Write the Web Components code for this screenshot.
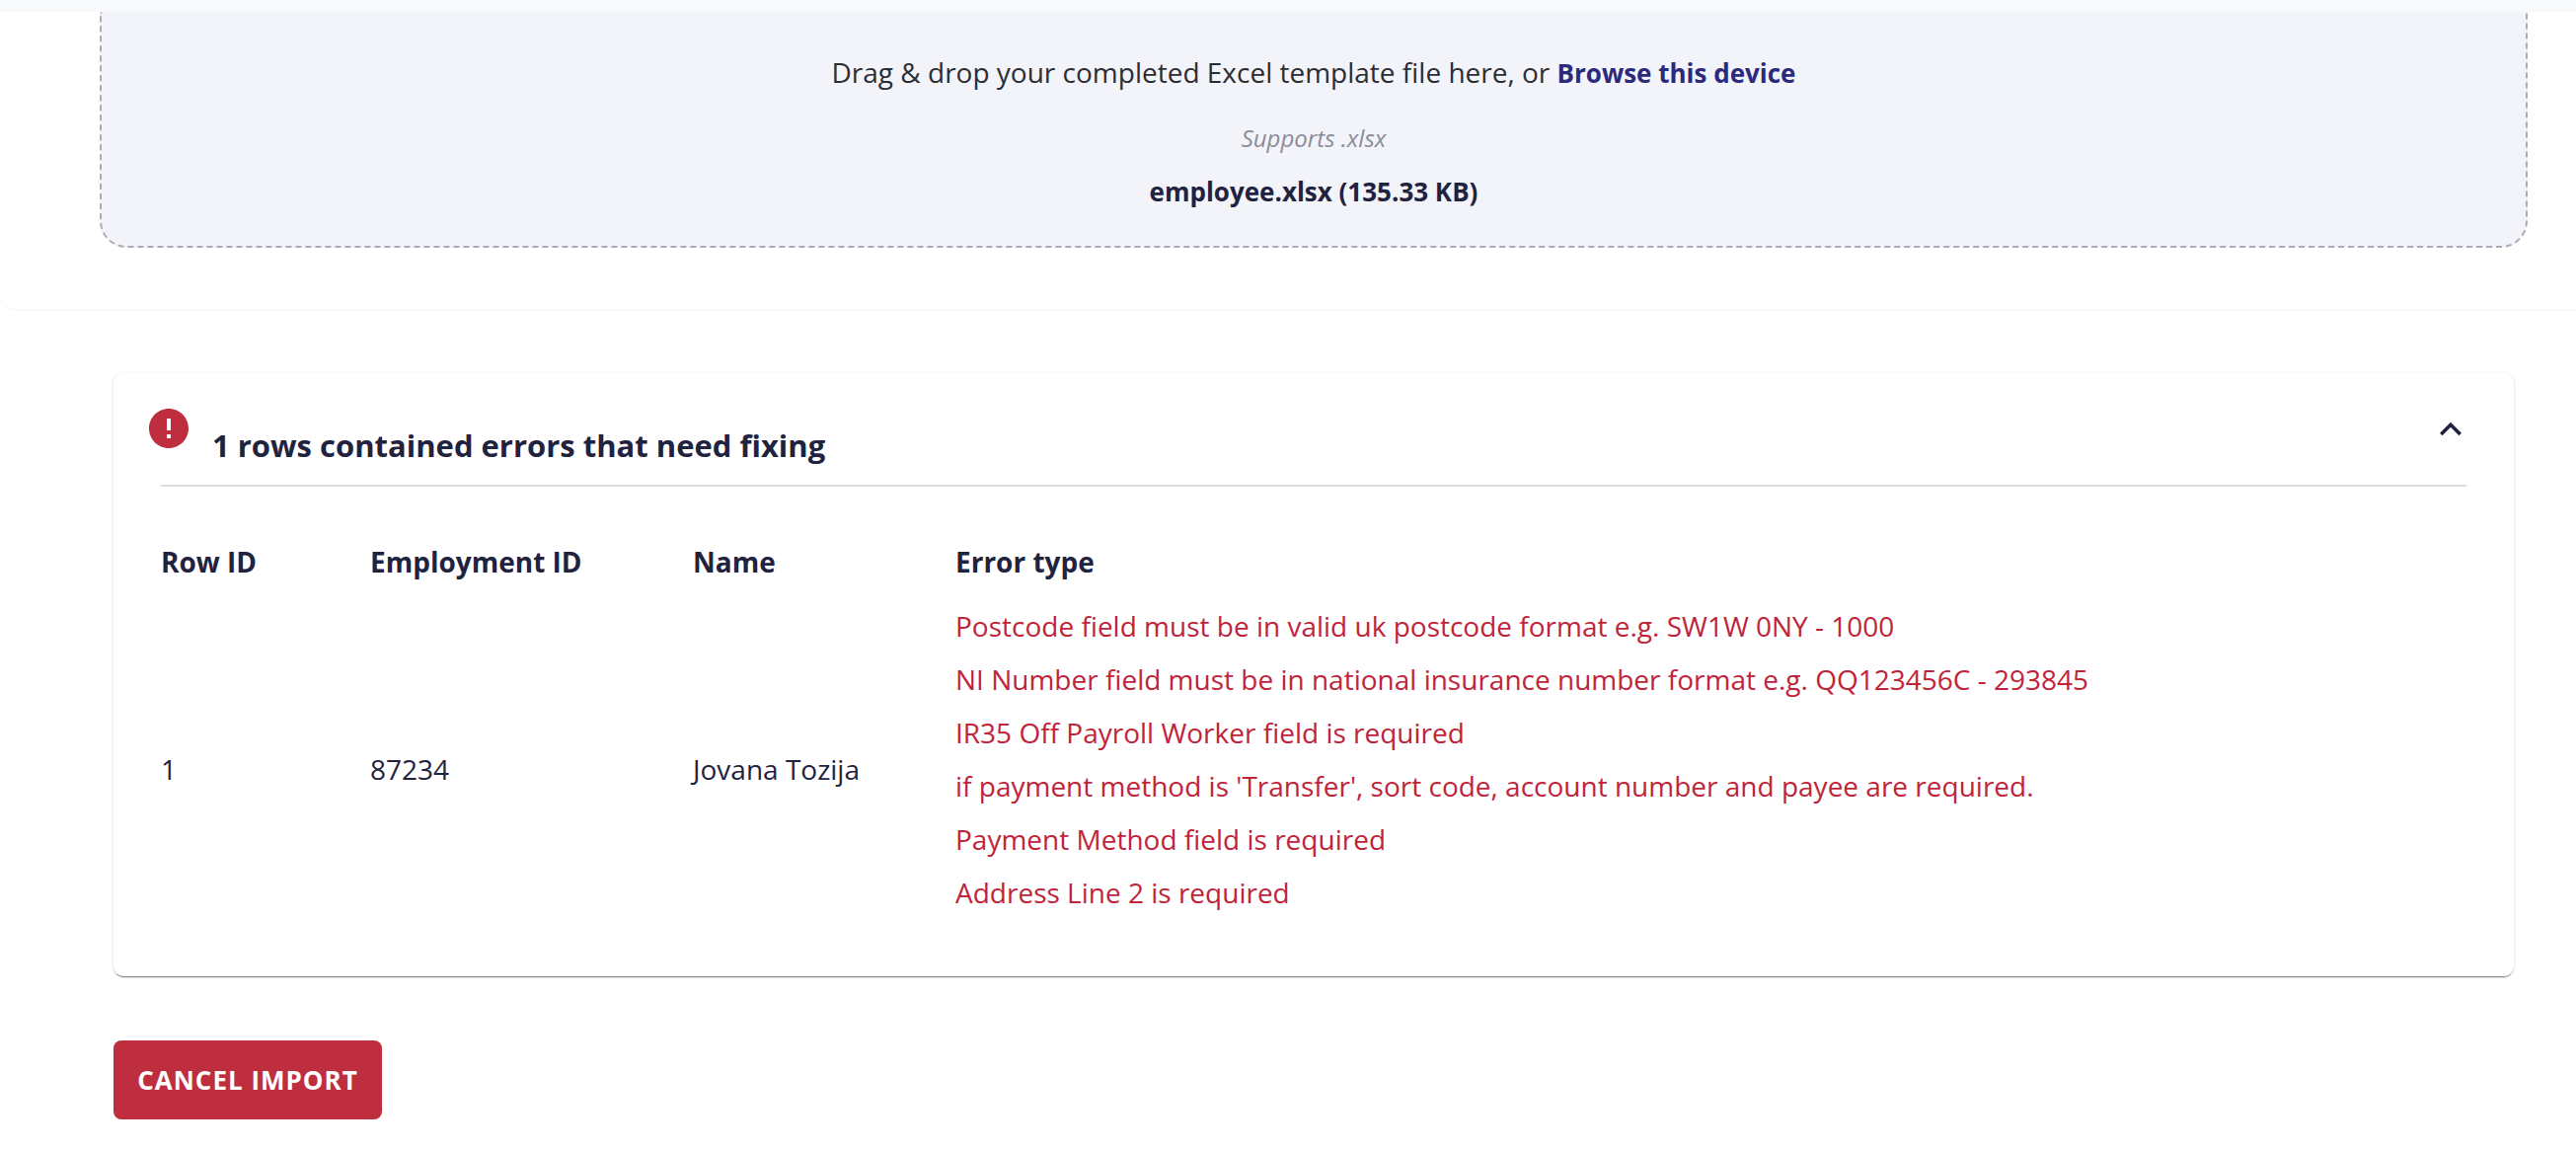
<!DOCTYPE html>
<html><head><meta charset="utf-8"><style>
html,body{margin:0;padding:0;background:#fff;}
body{font-family:"Open Sans",sans-serif;color:#1f2340;width:2610px;height:1166px;overflow:hidden;}
</style></head><body>
<upload-panel></upload-panel>
<error-card></error-card>
<cancel-button>CANCEL IMPORT</cancel-button>
<script>
function def(name,html){customElements.define(name,class extends HTMLElement{constructor(){super();this.attachShadow({mode:'open'}).innerHTML=html;}});}
def('upload-panel',`<style>
:host{display:block;background:#fff;border-bottom:2px solid #f6f7f9;border-bottom-left-radius:18px;padding:12px 49px 63px 101px;box-sizing:border-box;height:315px;position:relative;}
.strip{position:absolute;left:0;right:0;top:0;height:12px;background:#f8f9fb;}
.drop{height:239px;box-sizing:border-box;background:#f3f4f9;border:2px dashed #abacb2;border-top:none;border-radius:0 0 27px 27px;text-align:center;display:flex;flex-direction:column;align-items:center;}
.main{font-size:28px;line-height:38px;color:#2c2d33;margin-top:42px;}
.main b{color:#2b2a7c;font-weight:700;font-size:26px;}
.sup{font-size:24px;line-height:32px;font-style:italic;color:#8b8c99;margin-top:31px;}
.file{font-size:26px;line-height:36px;font-weight:700;color:#1f2340;margin-top:20px;}
</style><div class="strip"></div><div class="drop"><div class="main">Drag &amp; drop your completed Excel template file here, or <b>Browse this device</b></div><div class="sup">Supports .xlsx</div><div class="file">employee.xlsx (135.33 KB)</div></div>`);
def('error-card',`<style>
:host{display:block;margin:63px 63px 0 115px;background:#fff;border-radius:10px;box-shadow:0 2px 1px -1px rgba(0,0,0,.45),0 1px 3px rgba(0,0,0,.12),0 0 4px rgba(0,0,0,.05);height:611px;box-sizing:border-box;padding:32px 48px 0 32px;}
.head{display:flex;align-items:flex-start;height:81px;position:relative;}
.icon{width:48px;height:48px;flex:none;}
.title{font-size:31px;line-height:42px;font-weight:700;margin:20px 0 0 20px;flex:1;}
.chev{width:44px;height:44px;flex:none;margin:3px -6px 0 0;}
.rule{height:2px;background:#ddd;margin-left:16px;}
.table{margin-left:16px;display:grid;grid-template-columns:212px 327px 266px 1fr;align-items:center;font-size:28px;}
.th{font-weight:700;line-height:38px;padding-top:57px;padding-bottom:19px;}
.cell{padding-top:20px;}
.errs{color:#c0243a;}
.errs div{line-height:54px;}
</style><div class="head"><svg class="icon" viewBox="0 0 24 24"><path fill="#bf2e3f" d="M12 2C6.480 2 2 6.480 2 12s4.480 10 10 10 10-4.480 10-10S17.520 2 12 2zm1 15h-2v-2h2v2zm0-4h-2V7h2v6z"/></svg><div class="title">1 rows contained errors that need fixing</div><svg class="chev" viewBox="0 0 24 24"><path fill="#1f2340" d="M12 8l-6 6 1.410 1.410L12 10.830l4.590 4.580L18 14z"/></svg></div><div class="rule"></div>
<div class="table"><div class="th">Row ID</div><div class="th">Employment ID</div><div class="th">Name</div><div class="th">Error type</div>
<div class="cell">1</div><div class="cell">87234</div><div class="cell">Jovana Tozija</div><div class="errs"><div>Postcode field must be in valid uk postcode format e.g. SW1W 0NY - 1000</div><div>NI Number field must be in national insurance number format e.g. QQ123456C - 293845</div><div>IR35 Off Payroll Worker field is required</div><div>if payment method is 'Transfer', sort code, account number and payee are required.</div><div>Payment Method field is required</div><div>Address Line 2 is required</div></div></div>`);
def('cancel-button',`<style>
:host{display:inline-flex;align-items:center;justify-content:center;margin:65px 0 0 115px;width:272px;height:80px;border-radius:8px;background:#bf2e3f;color:#fff;font-weight:700;font-size:26px;letter-spacing:1px;}
</style><slot></slot>`);
</script></body></html>
